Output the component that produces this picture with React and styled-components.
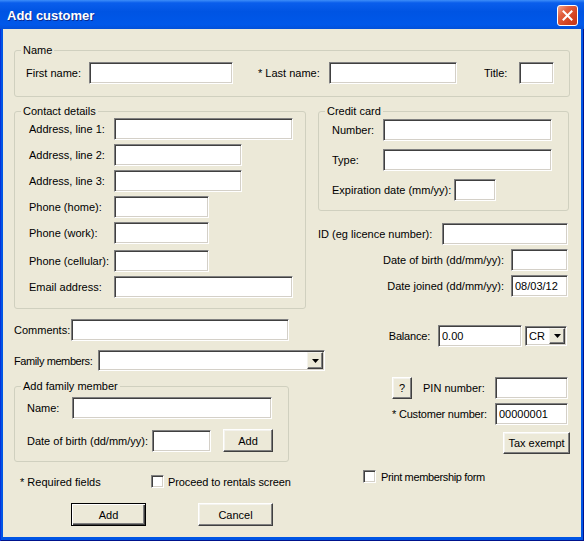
import React from 'react'
import styled, { createGlobalStyle, css } from 'styled-components'

const UI_FONT = `"Liberation Sans", Arial, sans-serif`

const GlobalStyle = createGlobalStyle`
  html, body {
    margin: 0;
    padding: 0;
    background: #0054e3;
  }
  body {
    font-family: ${UI_FONT};
    font-size: 11px;
    color: #000;
  }
  * {
    box-sizing: border-box;
  }
`

const Window = styled.div`
  width: 584px;
  height: 541px;
  display: flex;
  flex-direction: column;
  overflow: hidden;
`

const TitleBar = styled.div`
  flex: none;
  height: 29px;
  display: flex;
  align-items: center;
  justify-content: space-between;
  padding: 1px 6px 0 7px;
  background: linear-gradient(
    180deg,
    #3d8ef9 0%,
    #0a5eec 10%,
    #0054e3 40%,
    #0058ea 85%,
    #0350d8 100%
  );
`

const Title = styled.span`
  font: bold 13px ${UI_FONT};
  color: #fff;
  text-shadow: 1px 1px 0 #0a2a8f;
`

const CloseButton = styled.span`
  width: 21px;
  height: 21px;
  display: flex;
  align-items: center;
  justify-content: center;
  border: 1px solid #fff;
  border-radius: 3px;
  background: linear-gradient(135deg, #f3a58c 0%, #e2603f 32%, #d2411f 70%, #c4371a 100%);
`

const Frame = styled.div`
  flex: 1;
  display: flex;
  padding: 0 3px 4px;
  background: #0055e5;
  box-shadow: inset 1px 0 0 #0831d9, inset -1px 0 0 #00138c, inset 0 -1px 0 #00138c;
`

const Body = styled.div`
  flex: 1;
  display: flex;
  flex-direction: column;
  padding: 21px 11px 0;
  background: #ece9d8;
`

const Group = styled.div`
  position: relative;
  display: flex;
  flex-direction: column;
  flex: none;
  width: ${p => (p.$w ? `${p.$w}px` : 'auto')};
  margin-top: ${p => p.$mt || 0}px;
  padding: ${p => p.$pad};
  gap: ${p => p.$gap || 0}px;
  border: 1px solid #d0d0bf;
  border-radius: 3px;
`

const Caption = styled.span`
  position: absolute;
  top: -7px;
  left: 6px;
  padding: 0 2px;
  line-height: 13px;
  background: #ece9d8;
  white-space: nowrap;
`

const Section = styled.div`
  display: flex;
  align-items: flex-start;
  justify-content: ${p => p.$justify || 'flex-start'};
  gap: ${p => p.$gap || 0}px;
  margin-top: ${p => p.$mt || 0}px;
`

const Column = styled.div`
  display: flex;
  flex-direction: column;
  flex: none;
  width: ${p => p.$w}px;
`

const Row = styled.div`
  display: flex;
  align-items: center;
  justify-content: ${p => p.$justify || 'flex-start'};
  gap: ${p => p.$gap || 0}px;
  margin-top: ${p => p.$mt || 0}px;
  padding-left: ${p => p.$pl || 0}px;
  padding-right: ${p => p.$pr || 0}px;
`

const Label = styled.label`
  flex: none;
  width: ${p => (p.$w ? `${p.$w}px` : 'auto')};
  margin-left: ${p => p.$ml || 0}px;
  text-align: ${p => p.$align || 'left'};
  letter-spacing: ${p => p.$ls || 0}px;
  white-space: nowrap;
`

const sunken = css`
  border: 1px solid;
  border-color: #808080 #fff #fff #808080;
  box-shadow: inset 1px 1px 0 #404040, inset -1px -1px 0 #d4d0c8;
`

const TextBox = styled.input`
  flex: none;
  width: ${p => p.$w}px;
  height: ${p => p.$h || 22}px;
  margin: 0 0 0 ${p => p.$ml || 0}px;
  padding: 0 3px;
  font: 11px ${UI_FONT};
  color: #000;
  background: #fff;
  outline: none;
  ${sunken}
`

const Button = styled.button`
  flex: none;
  width: ${p => p.$w}px;
  height: ${p => p.$h || 23}px;
  margin: 0 0 0 ${p => p.$ml || 0}px;
  padding: 0;
  font: 11px ${UI_FONT};
  color: #000;
  background: #ece9d8;
  border: 1px solid;
  border-color: #fff #404040 #404040 #fff;
  box-shadow: inset -1px -1px 0 #808080, inset 1px 1px 0 #f4f3ee;
  ${p =>
    p.$default &&
    css`
      border-color: #000;
      box-shadow: inset 1px 1px 0 #fff, inset -1px -1px 0 #404040, inset -2px -2px 0 #808080;
    `}
`

const Combo = styled.div`
  flex: none;
  display: flex;
  align-items: stretch;
  justify-content: space-between;
  width: ${p => p.$w}px;
  height: ${p => p.$h || 21}px;
  margin-left: ${p => p.$ml || 0}px;
  padding: 1px;
  background: #fff;
  ${sunken}
`

const ComboText = styled.span`
  display: flex;
  align-items: center;
  padding-left: 2px;
`

const DropButton = styled.span`
  flex: none;
  width: 16px;
  display: flex;
  align-items: center;
  justify-content: center;
  background: #ece9d8;
  border: 1px solid;
  border-color: #f4f3ee #404040 #404040 #f4f3ee;
  box-shadow: inset -1px -1px 0 #808080;
`

const CheckLabel = styled.label`
  display: flex;
  align-items: center;
  gap: ${p => p.$gap || 5}px;
  margin-left: ${p => p.$ml || 0}px;
  letter-spacing: ${p => p.$ls || 0}px;
  white-space: nowrap;
`

const CheckBox = styled.span`
  flex: none;
  width: 13px;
  height: 13px;
  background: #fff;
  ${sunken}
`

const PinGrid = styled.div`
  display: grid;
  grid-template-columns: 20px 61px 73px;
  column-gap: 11px;
  row-gap: 4px;
  align-items: center;
  justify-content: end;
  margin-top: 30px;
  padding-right: 2px;
`

const WideLabel = styled.label`
  grid-column: 1 / 3;
  text-align: right;
  letter-spacing: -0.2px;
  white-space: nowrap;
`

const Arrow = () => (
  <svg width="7" height="4" viewBox="0 0 7 4">
    <polygon points="0,0 7,0 3.5,4" fill="#000" />
  </svg>
)

const DropDown = ({ w, h, ml, value }) => (
  <Combo $w={w} $h={h} $ml={ml}>
    <ComboText>{value}</ComboText>
    <DropButton>
      <Arrow />
    </DropButton>
  </Combo>
)

const App = () => (
  <Window>
    <GlobalStyle />
    <TitleBar>
      <Title>Add customer</Title>
      <CloseButton>
        <svg width="11" height="11" viewBox="0 0 11 11">
          <path d="M1.5 1.5 L9.5 9.5 M9.5 1.5 L1.5 9.5" stroke="#fff" strokeWidth="2" strokeLinecap="square" />
        </svg>
      </CloseButton>
    </TitleBar>
    <Frame>
      <Body>
        <Group $pad="11px 14px 12px 11px">
          <Caption>Name</Caption>
          <Row>
            <Label $w={63}>First name:</Label>
            <TextBox $w={144} />
            <Label $w={71} $ml={25}>* Last name:</Label>
            <TextBox $w={128} />
            <Label $w={35} $ml={27}>Title:</Label>
            <TextBox $w={35} />
          </Row>
        </Group>

        <Section $mt={14} $gap={12}>
          <Group $w={292} $pad="6px 0 10px 14px" $gap={4}>
            <Caption>Contact details</Caption>
            <Row>
              <Label $w={85}>Address, line 1:</Label>
              <TextBox $w={179} />
            </Row>
            <Row>
              <Label $w={85}>Address, line 2:</Label>
              <TextBox $w={128} />
            </Row>
            <Row>
              <Label $w={85}>Address, line 3:</Label>
              <TextBox $w={128} />
            </Row>
            <Row>
              <Label $w={85}>Phone (home):</Label>
              <TextBox $w={95} />
            </Row>
            <Row>
              <Label $w={85}>Phone (work):</Label>
              <TextBox $w={95} />
            </Row>
            <Row $mt={2}>
              <Label $w={85}>Phone (cellular):</Label>
              <TextBox $w={95} />
            </Row>
            <Row>
              <Label $w={85}>Email address:</Label>
              <TextBox $w={179} />
            </Row>
          </Group>

          <Column $w={251}>
            <Group $pad="7px 0 9px 13px" $gap={8}>
              <Caption>Credit card</Caption>
              <Row>
                <Label $w={51}>Number:</Label>
                <TextBox $w={169} />
              </Row>
              <Row>
                <Label $w={51}>Type:</Label>
                <TextBox $w={169} />
              </Row>
              <Row>
                <Label $w={122}>Expiration date (mm/yy):</Label>
                <TextBox $w={42} />
              </Row>
            </Group>
            <Row $mt={12} $justify="space-between" $pr={1}>
              <Label>ID (eg licence number):</Label>
              <TextBox $w={126} />
            </Row>
            <Row $mt={4} $justify="flex-end" $gap={7} $pr={1}>
              <Label>Date of birth (dd/mm/yy):</Label>
              <TextBox $w={57} />
            </Row>
            <Row $mt={4} $justify="flex-end" $gap={7} $pr={1}>
              <Label>Date joined (dd/mm/yy):</Label>
              <TextBox $w={57} defaultValue="08/03/12" />
            </Row>
          </Column>
        </Section>

        <Section $mt={10} $justify="space-between">
          <Column $w={311}>
            <Row>
              <Label $w={57}>Comments:</Label>
              <TextBox $w={218} />
            </Row>
            <Row $mt={9}>
              <Label $w={84} $ls={-0.4}>Family members:</Label>
              <DropDown w={227} h={21} />
            </Row>
            <Group $mt={15} $w={275} $pad="10px 0 9px 12px" $gap={10}>
              <Caption>Add family member</Caption>
              <Row>
                <Label $w={45}>Name:</Label>
                <TextBox $w={200} />
              </Row>
              <Row>
                <Label $w={125}>Date of birth (dd/mm/yy):</Label>
                <TextBox $w={59} />
                <Button $w={50} $ml={12}>Add</Button>
              </Row>
            </Group>
            <Row $mt={13} $pl={6}>
              <Label $w={131}>* Required fields</Label>
              <CheckLabel $gap={4} $ls={-0.1}>
                <CheckBox />
                Proceed to rentals screen
              </CheckLabel>
            </Row>
            <Row $mt={15} $pl={57} $gap={52}>
              <Button $w={75} $default>Add</Button>
              <Button $w={75}>Cancel</Button>
            </Row>
          </Column>

          <Column $w={208}>
            <Row $mt={6} $justify="flex-end" $pr={3}>
              <Label $ls={-0.2}>Balance:</Label>
              <TextBox $w={84} $ml={8} defaultValue="0.00" />
              <DropDown w={42} h={20} ml={3} value="CR" />
            </Row>
            <PinGrid>
              <Button $w={20} $h={22}>?</Button>
              <Label $align="right">PIN number:</Label>
              <TextBox $w={73} />
              <WideLabel>* Customer number:</WideLabel>
              <TextBox $w={73} defaultValue="00000001" />
            </PinGrid>
            <Row $mt={7} $justify="flex-end">
              <Button $w={67} $h={22}>Tax exempt</Button>
            </Row>
            <Row $mt={16} $pl={1}>
              <CheckLabel $gap={5} $ls={-0.35}>
                <CheckBox />
                Print membership form
              </CheckLabel>
            </Row>
          </Column>
        </Section>
      </Body>
    </Frame>
  </Window>
)

export default App
